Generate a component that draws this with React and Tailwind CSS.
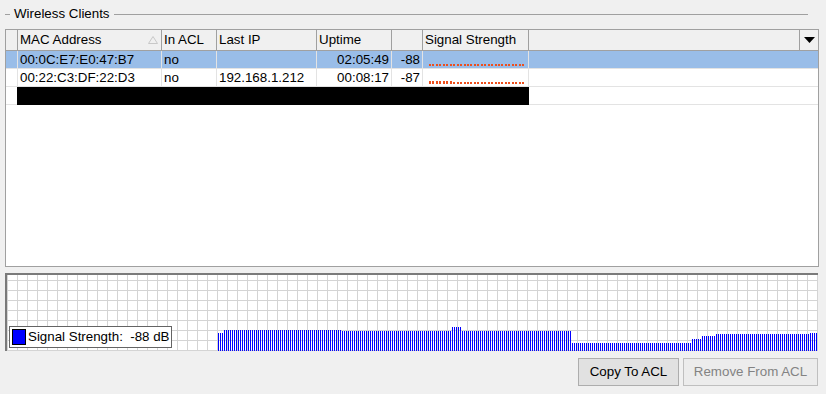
import React from 'react';

const cols = [
  { key: 'mac', label: 'MAC Address', w: 'w-[144px]', align: 'justify-start', sort: true },
  { key: 'acl', label: 'In ACL', w: 'w-[55px]', align: 'justify-start' },
  { key: 'ip', label: 'Last IP', w: 'w-[100px]', align: 'justify-start' },
  { key: 'up', label: 'Uptime', w: 'w-[75px]', align: 'justify-end' },
  { key: 'sig', label: '', w: 'w-[31px]', align: 'justify-end' },
  { key: 'bar', label: 'Signal Strength', w: 'w-[106px]', align: 'justify-start' },
];

const clients = [
  { mac: '00:0C:E7:E0:47:B7', acl: 'no', ip: '', up: '02:05:49', sig: '-88', tall: 0, selected: true },
  { mac: '00:22:C3:DF:22:D3', acl: 'no', ip: '192.168.1.212', up: '00:08:17', sig: '-87', tall: 7 },
];

// level meter in the "Signal Strength" column
const SignalDots = ({ tall }) => {
  const dots = [];
  for (let i = 0; i < 29; i++) {
    const big = i < tall;
    dots.push(<rect key={i} x={4 + Math.round(i * 3.45)} y={big ? 12 : 13} width="2" height={big ? 3 : 2} fill="#ee4f1c" />);
  }
  return (
    <svg width="106" height="17" className="block" shapeRendering="crispEdges">
      {dots}
    </svg>
  );
};

// bar history under the table: [from x, to x, top y] in page pixels
const segments = [
  [218, 224, 333],
  [224, 341, 330],
  [341, 452, 331],
  [452, 461, 327],
  [461, 571, 331],
  [571, 692, 343],
  [692, 702, 339],
  [702, 715, 336],
  [715, 809, 334],
  [809, 818, 333],
];

const Graph = () => {
  const lines = [];
  for (let x = 0; x <= 810; x += 10) {
    lines.push(<rect key={'v' + x} x={x} y="0" width="1" height="76" fill="#d4d4d4" />);
  }
  for (let y = 5; y <= 75; y += 10) {
    lines.push(<rect key={'h' + y} x="0" y={y} width="811" height="1" fill="#d4d4d4" />);
  }
  const bars = [];
  for (let x = 218; x < 818; x += 2) {
    const seg = segments.find(([a, b]) => x >= a && x < b);
    const top = seg[2];
    bars.push(<rect key={x} x={x - 7} y={top - 275} width="1" height={351 - top} fill="#0000ff" />);
  }
  return (
    <svg width="811" height="76" className="block" shapeRendering="crispEdges">
      <rect width="811" height="76" fill="#fff" />
      {lines}
      {bars}
    </svg>
  );
};

const App = () => {
  return (
    <div className="w-[826px] h-[394px] bg-[#f0f0f0] overflow-hidden font-['Liberation_Sans',Arial,sans-serif] text-[13.33px] text-black leading-none">
      {/* group title */}
      <div className="flex items-center h-[29px] pb-[1px]">
        <div className="ml-[5px] w-[5px] h-px bg-[#a0a0a0]" />
        <span className="px-[4px]">Wireless Clients</span>
        <div className="flex-1 h-px bg-[#a0a0a0] mr-[18px]" />
      </div>

      {/* client list */}
      <div className="ml-[5px] w-[814px] h-[238px] border border-[#a0a0a0] bg-white">
        <div className="flex h-[21px] bg-[#f0f0f0] border-b border-[#a0a0a0]">
          <div className="w-[12px] border-r border-[#a0a0a0]" />
          {cols.map((c) => (
            <div key={c.key} className={`${c.w} relative flex items-center pl-[2px] border-r border-[#a0a0a0]`}>
              {c.label}
              {c.sort && (
                <svg width="10" height="8" className="absolute right-[3px] top-[6px]">
                  <path d="M0.5 7.5 L5 0.5 L9.5 7.5 Z" fill="none" stroke="#c8c8c8" />
                </svg>
              )}
            </div>
          ))}
          <div className="flex-1 border-r border-[#a0a0a0]" />
          <div className="w-[18px] flex items-center justify-center">
            <svg width="11" height="6">
              <path d="M0 0 H11 L5.5 6 Z" fill="#000" />
            </svg>
          </div>
        </div>

        {clients.map((r) => (
          <div key={r.mac} className={`flex h-[18px] border-b border-[#e3e3e3] ${r.selected ? 'bg-[#99bde8]' : ''}`}>
            <div className="w-[12px] border-r border-[#e3e3e3]" />
            {cols.map((c) => (
              <div key={c.key} className={`${c.w} flex items-center ${c.align} pl-[2px] pr-[2px] border-r border-[#e3e3e3] whitespace-nowrap`}>
                {c.key === 'bar' ? <SignalDots tall={r.tall} /> : r[c.key]}
              </div>
            ))}
            <div className="flex-1" />
          </div>
        ))}

        <div className="flex h-[18px]">
          <div className="w-[11px] border-b border-[#e3e3e3]" />
          <div className="w-[512px] bg-black" />
          <div className="flex-1 border-b border-[#e3e3e3]" />
        </div>
      </div>

      {/* signal history */}
      <div className="relative mt-[6px] ml-[5px] w-[813px] border-l-2 border-t-2 border-[#7a7a7a]">
        <Graph />
        <div className="absolute left-[2px] top-[51px] w-[163px] h-[22px] bg-white border border-[#646464] flex items-center">
          <div className="ml-[2px] w-[14px] h-[16px] bg-[#0000ff] border border-black" />
          <span className="ml-[2px] whitespace-pre">Signal Strength:  -88 dB</span>
        </div>
      </div>

      <div className="flex justify-end gap-[4px] pr-[8px] mt-[7px]">
        <button className="w-[101px] h-[28px] bg-[#e1e1e1] border border-[#adadad] text-black">
          Copy To ACL
        </button>
        <button disabled className="w-[135px] h-[28px] bg-[#ececec] border border-[#bfbfbf] text-[#838383]">
          Remove From ACL
        </button>
      </div>
    </div>
  );
};

export default App;
